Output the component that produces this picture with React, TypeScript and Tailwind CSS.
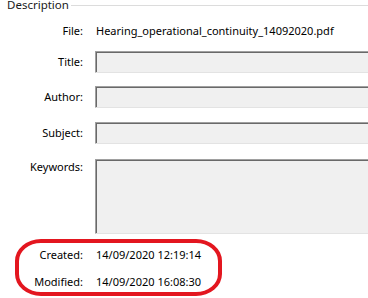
const Field = ({ tall }: { tall?: boolean }) => (
  <div
    className={`flex-1 -mr-4 border-t border-l border-[#a0a0a0] border-b border-b-[#e3e3e3] shadow-[inset_1px_1px_0_#696969] bg-[#f0f0f0] ${
      tall ? "h-[75px]" : "h-[22px]"
    }`}
  />
);

const Label = ({ children, top }: { children: string; top?: boolean }) => (
  <span className={`w-[83px] shrink-0 text-right leading-[16px] ${top ? "self-start" : ""}`}>
    {children}
  </span>
);

export default function App() {
  return (
    <div
      className="relative w-[368px] h-[298px] overflow-hidden bg-white text-[11px] text-black"
      style={{ fontFamily: '"Noto Sans", "Segoe UI", sans-serif' }}
    >
      {/* group box header */}
      <div className="flex items-center h-[10px] pl-[7px]">
        <span className="text-[11.5px] leading-[12px] text-[#1a1a1a]">Description</span>
        <div className="flex-1 h-px bg-[#dcdcdc] ml-[2px]" />
      </div>

      <div className="flex flex-col">
        <div className="flex items-center gap-[12px] mt-[12px] h-[18px]">
          <Label>File:</Label>
          <span className="pl-[1px] leading-[16px] whitespace-nowrap">
            Hearing_operational_continuity_14092020.pdf
          </span>
        </div>

        <div className="flex items-center gap-[12px] mt-[11px]">
          <Label>Title:</Label>
          <Field />
        </div>

        <div className="flex items-center gap-[12px] mt-[13px]">
          <Label>Author:</Label>
          <Field />
        </div>

        <div className="flex items-center gap-[12px] mt-[14px]">
          <Label>Subject:</Label>
          <Field />
        </div>

        <div className="flex items-start gap-[12px] mt-[15px]">
          <Label top>Keywords:</Label>
          <Field tall />
        </div>

        <div className="flex items-center gap-[12px] mt-[12px] h-[18px]">
          <Label>Created:</Label>
          <span className="pl-[1px] leading-[16px]">14/09/2020 12:19:14</span>
        </div>

        <div className="flex items-center gap-[12px] mt-[9px] h-[18px]">
          <Label>Modified:</Label>
          <span className="pl-[1px] leading-[16px]">14/09/2020 16:08:30</span>
        </div>
      </div>

      {/* red annotation */}
      <div className="absolute left-[15px] top-[239px] w-[207px] h-[57px] border-[4px] border-[#e3161f] rounded-[26px/22px]" />
    </div>
  );
}
